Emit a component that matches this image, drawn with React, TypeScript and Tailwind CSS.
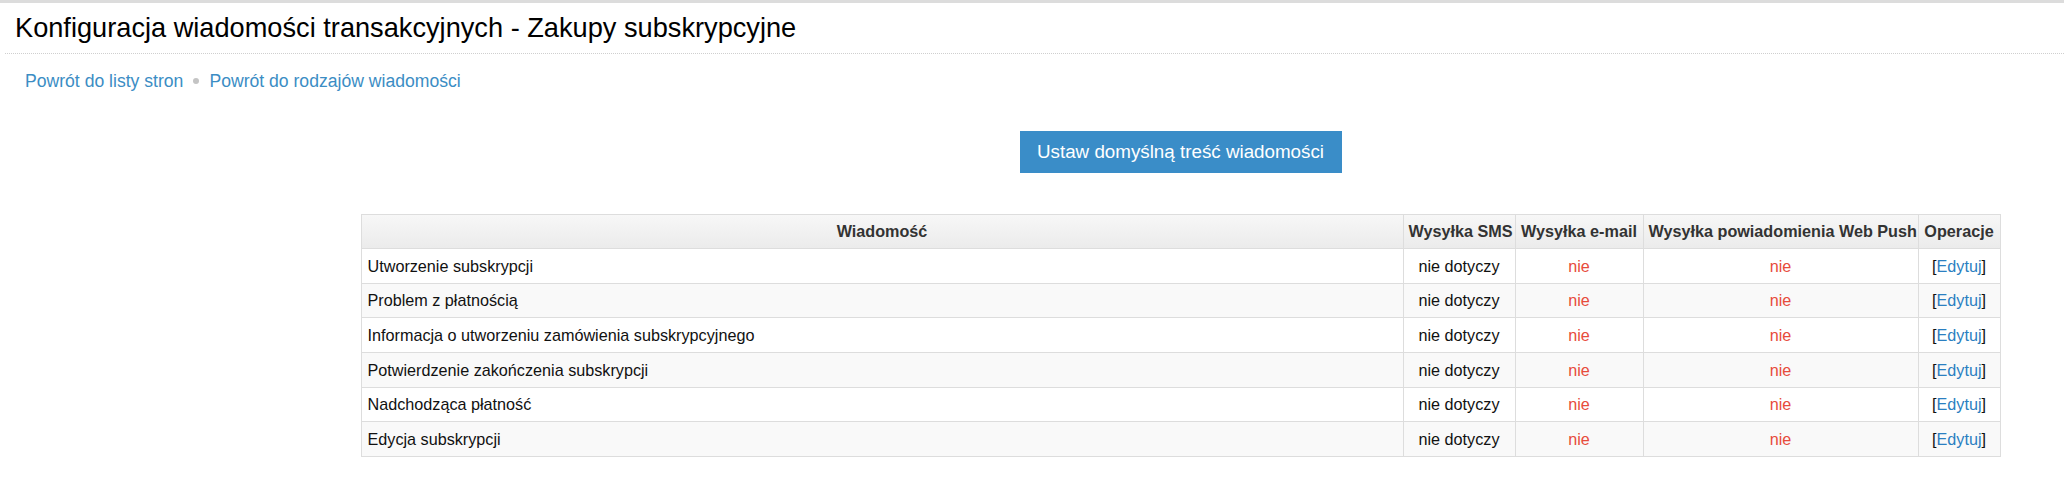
const rows = [
  "Utworzenie subskrypcji",
  "Problem z płatnością",
  "Informacja o utworzeniu zamówienia subskrypcyjnego",
  "Potwierdzenie zakończenia subskrypcji",
  "Nadchodząca płatność",
  "Edycja subskrypcji",
];

export default function App() {
  return (
    <div
      className="min-h-screen bg-white text-[#111]"
      style={{ fontFamily: '"Liberation Sans", Arial, sans-serif' }}
    >
      <div className="h-[3px] bg-[#dcdcdc]" />

      {/* nagłówek strony */}
      <div className="ml-[5px] border-b border-dotted border-[#cfcfcf] h-[51px] flex items-center pl-[10px]">
        <h1 className="text-[27.2px] leading-none text-black">
          Konfiguracja wiadomości transakcyjnych - Zakupy subskrypcyjne
        </h1>
      </div>

      <div className="flex items-center pl-[25px] h-[54px] text-[17.6px] text-[#3b8dc4]">
        <a href="#">Powrót do listy stron</a>
        <span className="mx-[10px] w-[6px] h-[6px] rounded-full bg-[#c4c4c4]" />
        <a href="#">Powrót do rodzajów wiadomości</a>
      </div>

      <div className="ml-[361px] w-[1639px] flex flex-col items-center">
        <button className="mt-[23px] w-[322px] h-[42px] bg-[#3a8dc8] text-white text-[18.8px]">
          Ustaw domyślną treść wiadomości
        </button>

        <table className="mt-[41px] w-[1639px] table-fixed border-collapse text-[16.2px]">
          <colgroup>
            <col className="w-[1042px]" />
            <col className="w-[112px]" />
            <col className="w-[128px]" />
            <col className="w-[275px]" />
            <col className="w-[82px]" />
          </colgroup>
          <thead>
            <tr className="h-[34px] bg-gradient-to-b from-[#f7f7f7] to-[#ebebeb] text-[#333] font-bold">
              <th className="border border-[#dddddd] px-[5px]">Wiadomość</th>
              <th className="border border-[#dddddd] px-[5px] whitespace-nowrap">Wysyłka SMS</th>
              <th className="border border-[#dddddd] px-[5px] whitespace-nowrap">Wysyłka e-mail</th>
              <th className="border border-[#dddddd] px-[5px] whitespace-nowrap">
                Wysyłka powiadomienia Web Push
              </th>
              <th className="border border-[#dddddd] px-[5px]">Operacje</th>
            </tr>
          </thead>
          <tbody>
            {rows.map((name, i) => (
              <tr key={name} className={`h-[34.7px] ${i % 2 === 1 ? "bg-[#f9f9f9]" : "bg-white"}`}>
                <td className="border border-[#dddddd] px-[6px]">{name}</td>
                <td className="border border-[#dddddd] text-center">nie dotyczy</td>
                <td className="border border-[#dddddd] text-center text-[#e74c3c]">nie</td>
                <td className="border border-[#dddddd] text-center text-[#e74c3c]">nie</td>
                <td className="border border-[#dddddd] text-center">
                  [<a href="#" className="text-[#2b7fc1]">Edytuj</a>]
                </td>
              </tr>
            ))}
          </tbody>
        </table>
      </div>
    </div>
  );
}
